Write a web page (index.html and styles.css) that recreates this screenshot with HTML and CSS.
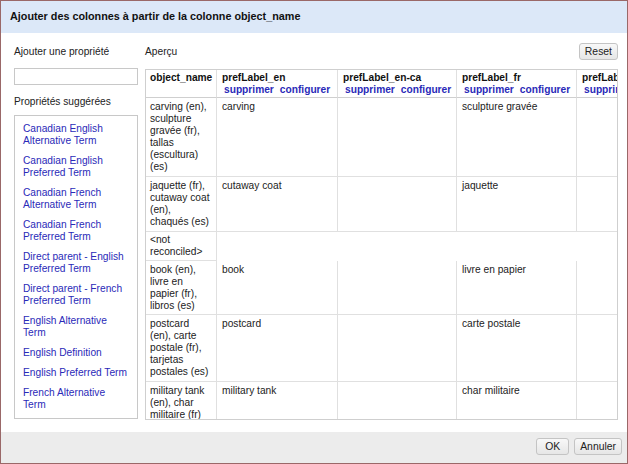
FILE: index.html
```html
<!DOCTYPE html>
<html lang="fr">
<head>
<meta charset="utf-8">
<title>Ajouter des colonnes</title>
<link rel="stylesheet" href="styles.css">
</head>
<body>
<div class="dialog">
  <div class="dialog-header">Ajouter des colonnes à partir de la colonne object_name</div>
  <div class="dialog-body">
    <div class="left">
      <div class="label first">Ajouter une propriété</div>
      <input class="prop-input" type="text">
      <div class="label second">Propriétés suggérées</div>
      <div class="suggest-box">
        <a class="suggest">Canadian English Alternative Term</a>
        <a class="suggest">Canadian English Preferred Term</a>
        <a class="suggest">Canadian French Alternative Term</a>
        <a class="suggest">Canadian French Preferred Term</a>
        <a class="suggest">Direct parent - English Preferred Term</a>
        <a class="suggest">Direct parent - French Preferred Term</a>
        <a class="suggest">English Alternative Term</a>
        <a class="suggest">English Definition</a>
        <a class="suggest">English Preferred Term</a>
        <a class="suggest">French Alternative Term</a>
      </div>
    </div>
    <div class="right">
      <div class="preview-top">
        <span class="label">Aperçu</span>
        <button class="btn">Reset</button>
      </div>
      <div class="preview">
        <table class="grid">
          <thead>
            <tr>
              <th class="c-name">object_name</th>
              <th class="c-en">prefLabel_en<br><span class="links"><a>supprimer</a><a>configurer</a></span></th>
              <th class="c-enca">prefLabel_en-ca<br><span class="links"><a>supprimer</a><a>configurer</a></span></th>
              <th class="c-fr">prefLabel_fr<br><span class="links"><a>supprimer</a><a>configurer</a></span></th>
              <th class="c-es">prefLabel_es<br><span class="links"><a>supprimer</a><a>configurer</a></span></th>
            </tr>
          </thead>
          <tbody>
            <tr>
              <td>carving (en), sculpture gravée (fr), tallas (escultura) (es)</td>
              <td>carving</td><td></td><td>sculpture gravée</td><td></td>
            </tr>
            <tr>
              <td>jaquette (fr), cutaway coat (en), chaqués (es)</td>
              <td>cutaway coat</td><td></td><td>jaquette</td><td></td>
            </tr>
            <tr class="short">
              <td>&lt;not reconciled&gt;</td>
              <td class="span" colspan="4"></td>
            </tr>
            <tr class="tight">
              <td>book (en), livre en papier (fr), libros (es)</td>
              <td>book</td><td></td><td>livre en papier</td><td></td>
            </tr>
            <tr>
              <td>postcard (en), carte postale (fr), tarjetas postales (es)</td>
              <td>postcard</td><td></td><td>carte postale</td><td></td>
            </tr>
            <tr>
              <td>military tank (en), char militaire (fr)</td>
              <td>military tank</td><td></td><td>char militaire</td><td></td>
            </tr>
          </tbody>
        </table>
      </div>
    </div>
  </div>
  <div class="dialog-footer">
    <button class="btn ok">OK</button>
    <button class="btn">Annuler</button>
  </div>
</div>
</body>
</html>
```
FILE: styles.css
```css
* { box-sizing: border-box; }
html, body { margin: 0; padding: 0; background: #fff; }
body {
  font-family: "Liberation Sans", Arial, sans-serif;
  font-size: 10.2px;
  line-height: 12px;
  color: #222;
}
.dialog {
  width: 628px;
  height: 464px;
  border: 1px solid #9a6868;
  display: flex;
  flex-direction: column;
  overflow: hidden;
}
.dialog-header {
  height: 32px;
  flex: none;
  background: #dce8f8;
  font-weight: bold;
  font-size: 10.8px;
  line-height: 31px;
  padding-left: 9px;
  color: #111;
}
.dialog-body {
  flex: 1;
  display: flex;
  padding: 10px 9px 0 13px;
  min-height: 0;
}
.left {
  width: 124px;
  flex: none;
  display: flex;
  flex-direction: column;
}
.label { line-height: 12px; }
.label.first { margin-top: 3px; }
.label.second { margin-top: 11px; }
.prop-input {
  margin: 10px 0 0;
  height: 17px;
  width: 124px;
  border: 1px solid #c8c8c8;
  padding: 0 3px;
  font: inherit;
  background: #fff;
}
.suggest-box {
  margin-top: 7px;
  height: 304px;
  border: 1px solid #c8c8c8;
  padding: 7px 7px 0 8px;
  overflow: hidden;
}
.suggest {
  display: block;
  color: #2a2ab8;
  margin-bottom: 8px;
  line-height: 12px;
  cursor: pointer;
}
.right {
  flex: 1;
  min-width: 0;
  margin-left: 7px;
  display: flex;
  flex-direction: column;
}
.preview-top {
  height: 17px;
  display: flex;
  justify-content: space-between;
  align-items: center;
}
.btn {
  font: inherit;
  font-size: 10.4px;
  color: #222;
  height: 17px;
  line-height: 15px;
  padding: 0 5px;
  border: 1px solid #c4c4c4;
  border-radius: 3px;
  background: linear-gradient(#f8f8f8, #e6e6e6);
}
.preview {
  margin-top: 9px;
  height: 351px;
  border: 1px solid #cfcfcf;
  overflow: hidden;
}
.grid {
  border-collapse: separate;
  border-spacing: 0;
  table-layout: fixed;
  width: 551px;
}
.grid th, .grid td {
  border-right: 1px solid #e0e0e0;
  border-bottom: 1px solid #e0e0e0;
  text-align: left;
  vertical-align: top;
  line-height: 12px;
  overflow: hidden;
}
.grid th {
  font-weight: bold;
  padding: 2px 2px 1px 5px;
  white-space: nowrap;
  border-bottom-color: #cfcfcf;
  color: #111;
}
.grid td { padding: 3px 4px 3px 5px; }
.grid .c-name { width: 71px; padding-left: 4px; }
.grid td:first-child { padding-left: 4px; padding-right: 5px; }
.grid .c-en { width: 121px; }
.grid .c-enca { width: 119px; }
.grid .c-fr { width: 120px; }
.grid .c-es { width: 120px; }
.grid tr.short td { padding-top: 2px; padding-bottom: 2px; }
.grid tr.tight td { padding-bottom: 2px; }
.grid td.span { border-bottom: none; border-right: none; }
.links { padding-left: 2px; }
.links a { color: #2a2ab8; cursor: pointer; }
.links a + a { margin-left: 6px; }
.dialog-footer {
  height: 31px;
  flex: none;
  background: #ececec;
  display: flex;
  justify-content: flex-end;
  align-items: center;
  gap: 5px;
  padding: 0 5px 2px 0;
}
.btn.ok { padding: 0 8px; }
```
